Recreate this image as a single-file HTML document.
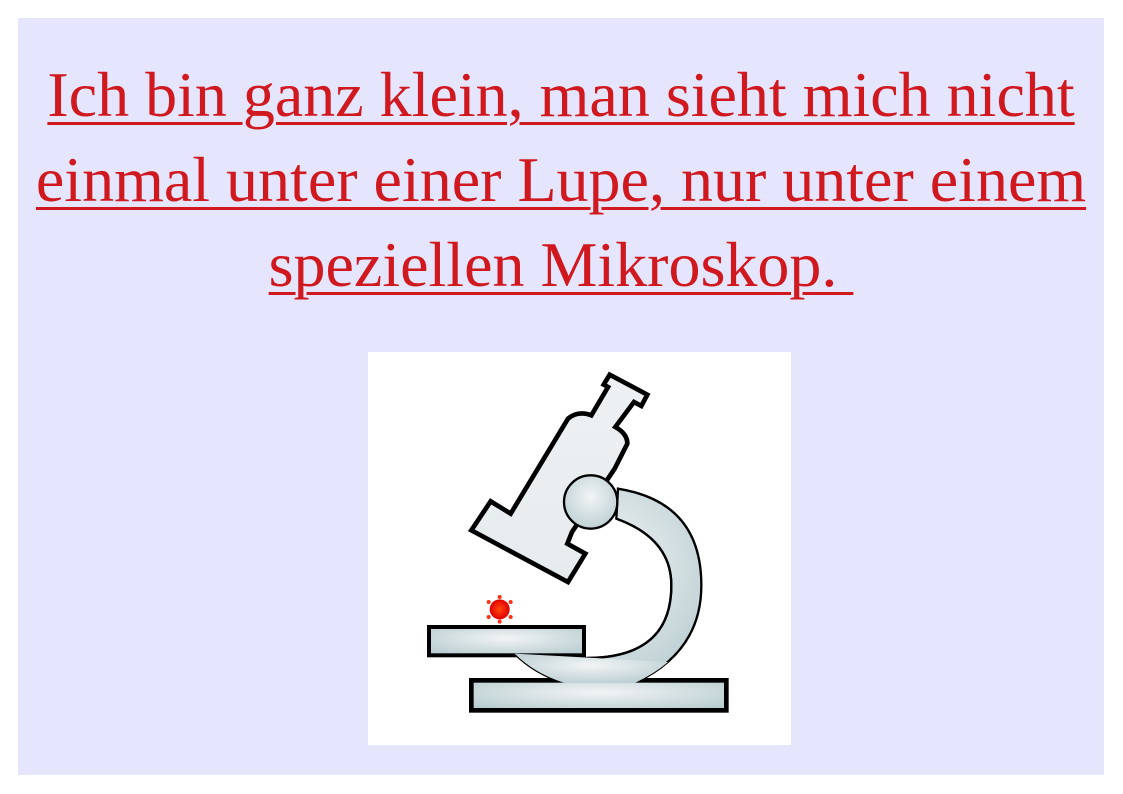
<!DOCTYPE html>
<html><head><meta charset="utf-8"><style>
html,body{margin:0;padding:0;background:#fff;width:1123px;height:794px;overflow:hidden}
.panel{position:absolute;left:18px;top:18px;width:1086px;height:757px;background:#e5e5fd}
.t{position:absolute;left:-10px;top:34px;width:1106px;text-align:center;font-family:"Liberation Serif",serif;font-size:64px;line-height:85px;color:#d0191e;text-decoration:underline;text-decoration-thickness:3px;text-underline-offset:6px;white-space:nowrap}
.img{position:absolute;left:350px;top:334px;width:423px;height:393px;background:#fff}
</style></head><body>
<div class="panel">
<div class="t">Ich bin ganz klein, man sieht mich nicht<br>einmal unter einer Lupe, nur unter einem<br>speziellen Mikroskop.&nbsp;</div>
<div class="img">
<svg width="423" height="393" viewBox="0 0 1269 1179">
<defs>
<radialGradient id="g" cx="0.5" cy="0.4" r="0.7"><stop offset="0" stop-color="#f2f4f5"/><stop offset="1" stop-color="#b6cbcf"/></radialGradient>
<linearGradient id="g2" x1="0" y1="0" x2="0" y2="1"><stop offset="0" stop-color="#eef1f3"/><stop offset="1" stop-color="#e6ebed"/></linearGradient>
<radialGradient id="r"><stop offset="0" stop-color="#ff4a10"/><stop offset="1" stop-color="#e00000"/></radialGradient>
</defs>
<g stroke="#000" stroke-linejoin="miter">
<path d="M725,68 L838,128 L820,162 L798,150 L742,225 Q778,245 778,275 L740,350 L612,540 L598,575 L652,605 L600,690 L310,535 L368,448 L428,485 L600,200 Q630,175 670,190 L720,105 L707,98 Z" fill="url(#g2)" stroke-width="14"/>
<path d="M440,905 Q500,965 590,993 L800,993 Q1000,900 1000,700 Q1000,450 750,410 L745,500 Q910,560 910,700 Q910,920 650,918 L575,910 Z" fill="url(#g)" stroke-width="7"/>
<circle cx="668" cy="450" r="80" fill="url(#g)" stroke-width="7"/>
<path d="M745,500 Q910,560 910,700 Q910,920 650,918 L575,910" fill="none" stroke-width="7"/>
<rect x="183" y="825" width="465" height="85" fill="url(#g)" stroke-width="12"/>
<rect x="310" y="985" width="765" height="90" fill="url(#g)" stroke-width="14"/>
<path d="M440,905 Q500,965 590,993 L800,993 Q860,965 900,930" fill="url(#g)" stroke="none"/>
</g>
<g fill="#ff3010"><circle cx="395" cy="772" r="30" fill="url(#r)"/>
<circle cx="395" cy="735" r="6"/><circle cx="395" cy="809" r="6"/><circle cx="362" cy="750" r="6"/><circle cx="428" cy="750" r="6"/><circle cx="362" cy="795" r="6"/><circle cx="428" cy="795" r="6"/></g>
</svg>
</div>
</div>
</body></html>
